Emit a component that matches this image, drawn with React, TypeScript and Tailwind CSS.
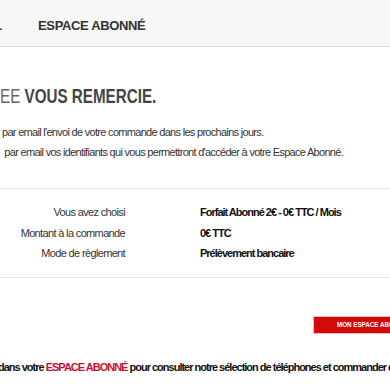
import React from 'react';

export default function App() {
  const rows = [
    ['Vous avez choisi', 'Forfait Abonné 2€ - 0€ TTC / Mois'],
    ['Montant à la commande', '0€ TTC'],
    ['Mode de règlement', 'Prélèvement bancaire'],
  ];

  return (
    <div
      className="w-[390px] h-[390px] overflow-hidden bg-white text-[#333]"
      style={{ fontFamily: '"Liberation Sans", Arial, sans-serif' }}
    >
      {/* header */}
      <div className="h-[47px] bg-[#f7f7f7] border-b border-[#dcdcdc] flex items-center whitespace-nowrap pt-[5px]">
        <span className="ml-[-6px] w-[44px] text-[13px] font-bold text-[#333]">L</span>
        <span className="text-[13px] font-bold text-[#333] tracking-[-0.35px]">ESPACE ABONNÉ</span>
      </div>

      {/* title */}
      <h1 className="mt-[36px] text-[20px] leading-[26px] text-[#444] whitespace-nowrap origin-left scale-x-[0.76]">
        <span className="font-normal text-[#666]">EE </span>
        <span className="font-bold">VOUS REMERCIE.</span>
      </h1>

      {/* messages */}
      <div className="mt-[13px] pl-[2px] text-[11px] leading-[20px] tracking-[-0.7px] whitespace-nowrap text-[#333]">
        <p>par email l'envoi de votre commande dans les prochains jours.</p>
        <p>&nbsp;par email vos identifiants qui vous permettront d'accéder à votre Espace Abonné.</p>
      </div>

      {/* summary */}
      <div className="mt-[26px] border-t border-b border-[#e3e3e3] py-[13px]">
        {rows.map(([label, value]) => (
          <div key={label} className="flex items-center h-[20.5px] text-[11px] whitespace-nowrap">
            <div className="w-[125px] text-right text-[#333] tracking-[-0.65px]">{label}</div>
            <div className="ml-[75px] font-bold text-[#111] tracking-[-1px]">{value}</div>
          </div>
        ))}
      </div>

      {/* button */}
      <div className="mt-[39px] pl-[314px] whitespace-nowrap">
        <div className="h-[16px] w-[130px] bg-[#d20a0a] text-white text-[8px] font-bold flex items-center pl-[23px] shadow-[0_0_0_1px_#eebcbc]">
          <span className="inline-block origin-left scale-x-[0.78]">MON ESPACE ABONNÉ</span>
        </div>
      </div>

      {/* footer text */}
      <p className="mt-[26px] ml-[-2px] text-[11px] font-bold text-[#111] whitespace-nowrap tracking-[-1px]">
        dans votre <span className="text-[#c8102e]">ESPACE ABONNÉ</span> pour consulter notre sélection de téléphones et commander d'accessoires.
      </p>
    </div>
  );
}
